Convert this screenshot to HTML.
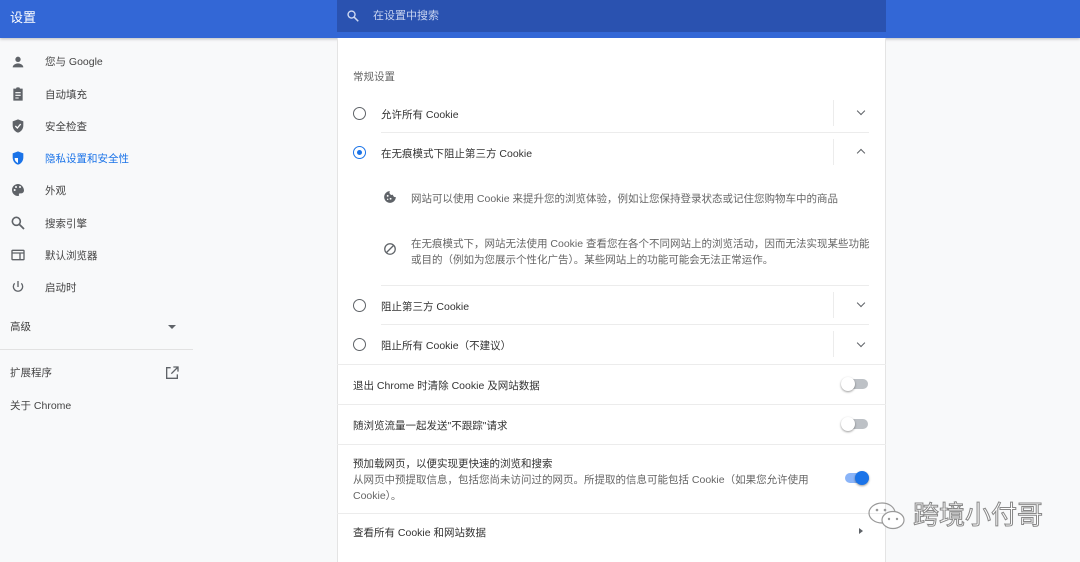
<!DOCTYPE html>
<html><head><meta charset="utf-8"><style>
*{margin:0;padding:0;box-sizing:border-box}
body{width:1080px;height:562px;overflow:hidden;background:#f8f9fa;font-family:"Liberation Sans","Noto Sans CJK SC",sans-serif;color:#333;position:relative;font-size:10px}
.a{position:absolute;white-space:nowrap}
#hdr{left:0;top:0;width:1080px;height:38px;background:#3367d6;box-shadow:0 1px 3px rgba(0,0,0,.25)}
#srch{left:337px;top:0;width:549px;height:32px;background:#2a52b0}
.nav{left:45px;font-size:10.5px;color:#444;line-height:12px;margin-top:1px}
.ic{left:10px;width:16px;height:16px}
#card{left:337px;top:38px;width:549px;height:524px;background:#fff;border-left:1px solid #e4e4e4;border-right:1px solid #e4e4e4}
.t{font-size:10.5px;color:#333;line-height:12px;margin-top:1.5px}
.g{color:#666}
.hl{height:1px;background:#ececec}
.vl{width:1px;height:26px;background:#ececec}
.rad{width:13px;height:13px;border:1.6px solid #5f6368;border-radius:50%}
.chev{width:6px;height:6px;border-right:1.4px solid #5f6368;border-bottom:1.4px solid #5f6368;transform:rotate(45deg)}
.tg{width:24px;height:10px;border-radius:5px;background:#bdc1c6}
.kn{width:14px;height:14px;border-radius:50%;background:#fff;box-shadow:0 1px 2px rgba(0,0,0,.4)}
</style></head><body>
<div class="a" id="hdr"></div>
<div class="a" style="left:10px;top:10px;font-size:13px;color:#fff;line-height:16px">设置</div>
<div class="a" id="srch"></div>
<svg class="a" style="left:346px;top:9px" width="14" height="14" viewBox="0 0 24 24"><circle cx="9.5" cy="9.5" r="6" fill="none" stroke="#cfd9f2" stroke-width="2.4"/><path d="M14 14l7 7" stroke="#cfd9f2" stroke-width="2.6"/></svg>
<div class="a" style="left:373px;top:9px;font-size:11px;color:#c8d4f0;line-height:14px">在设置中搜索</div>

<svg class="a ic" style="top:54px" viewBox="0 0 24 24"><circle cx="12" cy="8" r="4" fill="#5f6368"/><path d="M4 20c0-4 5-6 8-6s8 2 8 6z" fill="#5f6368"/></svg>
<div class="a nav" style="top:55px">您与 Google</div>
<svg class="a ic" style="top:86px" viewBox="0 0 24 24"><path d="M5 4h4l1-2h4l1 2h4v18H5z" fill="#5f6368"/><path d="M8 10h8M8 14h8M8 18h5" stroke="#fff" stroke-width="1.6"/></svg>
<div class="a nav" style="top:88px">自动填充</div>
<svg class="a ic" style="top:118px" viewBox="0 0 24 24"><path d="M12 2l8 3v6c0 6-4 10-8 11-4-1-8-5-8-11V5z" fill="#5f6368"/><path d="M8 12l3 3 5-6" stroke="#fff" stroke-width="2" fill="none"/></svg>
<div class="a nav" style="top:120px">安全检查</div>
<svg class="a ic" style="top:150px" viewBox="0 0 24 24"><path d="M12 2l8 3v6c0 6-4 10-8 11-4-1-8-5-8-11V5z" fill="#1a73e8"/><path d="M12 5v7H7c0 4 2 6 5 7.5" fill="#fff"/></svg>
<div class="a nav" style="top:152px;color:#1a73e8">隐私设置和安全性</div>
<svg class="a ic" style="top:182px" viewBox="0 0 24 24"><path d="M12 3a9 9 0 000 18c1.5 0 2-1 1.5-2-.6-1 0-2 1.5-2H17a4 4 0 004-4c0-5-4-10-9-10z" fill="#5f6368"/><circle cx="7" cy="12" r="1.5" fill="#fff"/><circle cx="9" cy="7.5" r="1.5" fill="#fff"/><circle cx="15" cy="7.5" r="1.5" fill="#fff"/></svg>
<div class="a nav" style="top:184px">外观</div>
<svg class="a ic" style="top:215px" viewBox="0 0 24 24"><circle cx="9.5" cy="9.5" r="6" fill="none" stroke="#5f6368" stroke-width="2.4"/><path d="M14 14l7 7" stroke="#5f6368" stroke-width="2.6"/></svg>
<div class="a nav" style="top:217px">搜索引擎</div>
<svg class="a ic" style="top:247px" viewBox="0 0 24 24"><rect x="3" y="5" width="18" height="14" rx="1" fill="none" stroke="#5f6368" stroke-width="2"/><path d="M3 9h18M15 9v10" stroke="#5f6368" stroke-width="2"/></svg>
<div class="a nav" style="top:249px">默认浏览器</div>
<svg class="a ic" style="top:279px" viewBox="0 0 24 24"><path d="M12 3v9" stroke="#5f6368" stroke-width="2"/><path d="M7 6.5a7 7 0 1010 0" fill="none" stroke="#5f6368" stroke-width="2"/></svg>
<div class="a nav" style="top:281px">启动时</div>
<div class="a nav" style="left:10px;top:320px">高级</div>
<div class="a" style="left:168px;top:325px;border:4px solid transparent;border-top:4px solid #5f6368"></div>
<div class="a hl" style="left:0;top:349px;width:193px;background:#e2e2e2"></div>
<div class="a nav" style="left:10px;top:366px">扩展程序</div>
<svg class="a" style="left:164px;top:365px" width="16" height="16" viewBox="0 0 24 24"><path d="M10 4H4v16h16v-6" fill="none" stroke="#5f6368" stroke-width="2"/><path d="M14 3h7v7M21 3l-10 10" fill="none" stroke="#5f6368" stroke-width="2"/></svg>
<div class="a nav" style="left:10px;top:399px">关于 Chrome</div>

<div class="a" id="card"></div>
<div class="a t g" style="left:353px;top:69px">常规设置</div>

<div class="a rad" style="left:353px;top:107px"></div>
<div class="a t" style="left:381px;top:107px">允许所有 Cookie</div>
<div class="a vl" style="left:833px;top:100px"></div>
<div class="a chev" style="left:858px;top:108px"></div>
<div class="a hl" style="left:381px;top:132px;width:488px"></div>

<div class="a rad" style="left:353px;top:146px;border-color:#1a73e8"></div>
<div class="a" style="left:357px;top:150px;width:5px;height:5px;border-radius:50%;background:#1a73e8"></div>
<div class="a t" style="left:381px;top:146px">在无痕模式下阻止第三方 Cookie</div>
<div class="a vl" style="left:833px;top:139px"></div>
<div class="a chev" style="left:858px;top:150px;transform:rotate(-135deg)"></div>

<svg class="a" style="left:383px;top:190px" width="14" height="14" viewBox="0 0 24 24"><path d="M12 2a10 10 0 1010 10 4 4 0 01-5-4 4 4 0 01-5-6z" fill="#5f6368"/><circle cx="8" cy="10" r="1.6" fill="#fff"/><circle cx="13" cy="15" r="1.6" fill="#fff"/><circle cx="8" cy="16" r="1.2" fill="#fff"/></svg>
<div class="a t g" style="left:411px;top:191px">网站可以使用 Cookie 来提升您的浏览体验，例如让您保持登录状态或记住您购物车中的商品</div>
<svg class="a" style="left:383px;top:242px" width="14" height="14" viewBox="0 0 24 24"><circle cx="12" cy="12" r="9" fill="none" stroke="#5f6368" stroke-width="2.2"/><path d="M6 18L18 6" stroke="#5f6368" stroke-width="2.2"/></svg>
<div class="a t g" style="left:411px;top:234px;line-height:16px">在无痕模式下，网站无法使用 Cookie 查看您在各个不同网站上的浏览活动，因而无法实现某些功能<br>或目的（例如为您展示个性化广告）。某些网站上的功能可能会无法正常运作。</div>
<div class="a hl" style="left:381px;top:285px;width:488px"></div>

<div class="a rad" style="left:353px;top:299px"></div>
<div class="a t" style="left:381px;top:299px">阻止第三方 Cookie</div>
<div class="a vl" style="left:833px;top:292px"></div>
<div class="a chev" style="left:858px;top:300px"></div>
<div class="a hl" style="left:381px;top:324px;width:488px"></div>

<div class="a rad" style="left:353px;top:338px"></div>
<div class="a t" style="left:381px;top:338px">阻止所有 Cookie（不建议）</div>
<div class="a vl" style="left:833px;top:331px"></div>
<div class="a chev" style="left:858px;top:340px"></div>
<div class="a hl" style="left:337px;top:364px;width:549px"></div>

<div class="a t" style="left:353px;top:378px">退出 Chrome 时清除 Cookie 及网站数据</div>
<div class="a tg" style="left:844px;top:379px"></div><div class="a kn" style="left:841px;top:377px"></div>
<div class="a hl" style="left:337px;top:404px;width:549px"></div>
<div class="a t" style="left:353px;top:418px">随浏览流量一起发送"不跟踪"请求</div>
<div class="a tg" style="left:844px;top:419px"></div><div class="a kn" style="left:841px;top:417px"></div>
<div class="a hl" style="left:337px;top:444px;width:549px"></div>
<div class="a t" style="left:353px;top:456px">预加载网页，以便实现更快速的浏览和搜索</div>
<div class="a t g" style="left:353px;top:470px;line-height:16px">从网页中预提取信息，包括您尚未访问过的网页。所提取的信息可能包括 Cookie（如果您允许使用<br>Cookie）。</div>
<div class="a tg" style="left:845px;top:473px;background:#8ab4f8"></div><div class="a kn" style="left:855px;top:471px;background:#1a73e8"></div>
<div class="a hl" style="left:337px;top:513px;width:549px"></div>
<div class="a t" style="left:353px;top:525px">查看所有 Cookie 和网站数据</div>
<div class="a" style="left:859px;top:528px;border:3.5px solid transparent;border-left:4px solid #5f6368"></div>

<svg class="a" style="left:866px;top:500px" width="44" height="32" viewBox="0 0 44 32"><ellipse cx="16" cy="13" rx="13" ry="10" fill="none" stroke="#999" stroke-width="1.2"/><ellipse cx="27" cy="20" rx="11" ry="8.5" fill="#fff" stroke="#999" stroke-width="1.2"/><circle cx="11" cy="10" r="1.3" fill="#999"/><circle cx="19" cy="10" r="1.3" fill="#999"/><circle cx="23" cy="19" r="1.2" fill="#999"/><circle cx="31" cy="19" r="1.2" fill="#999"/></svg>
<div class="a" style="left:913px;top:498px;font-size:26px;line-height:32px;color:#fff;-webkit-text-stroke:1px #888;font-family:'Noto Sans CJK SC',sans-serif">跨境小付哥</div>
</body></html>
